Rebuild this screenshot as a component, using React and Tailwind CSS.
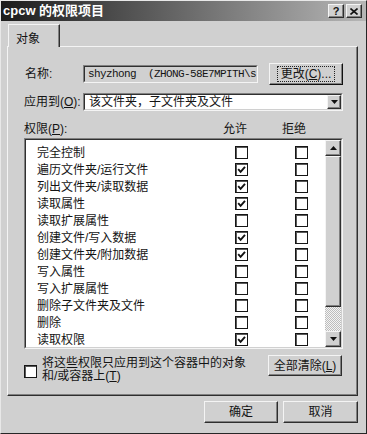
import React from 'react'

const rows = [
  ['完全控制', false],
  ['遍历文件夹/运行文件', true],
  ['列出文件夹/读取数据', true],
  ['读取属性', true],
  ['读取扩展属性', false],
  ['创建文件/写入数据', true],
  ['创建文件夹/附加数据', true],
  ['写入属性', false],
  ['写入扩展属性', false],
  ['删除子文件夹及文件', false],
  ['删除', false],
  ['读取权限', true],
]

function Raised({ className = '', children }) {
  return (
    <div
      className={`flex items-center justify-center border border-t-[#f4f4f4] border-l-[#f4f4f4] border-r-[#2e2e2e] border-b-[#2e2e2e] bg-[#d0d0d0] shadow-[inset_-1px_-1px_0_#808080] ${className}`}
    >
      {children}
    </div>
  )
}

function Sunken({ className = '', inner = '', children }) {
  return (
    <div className={`border border-t-[#808080] border-l-[#808080] border-r-[#f4f4f4] border-b-[#f4f4f4] ${className}`}>
      <div className={`h-full w-full border border-t-[#303030] border-l-[#303030] border-r-[#d0d0d0] border-b-[#d0d0d0] ${inner}`}>
        {children}
      </div>
    </div>
  )
}

function Check({ on }) {
  return (
    <div className="flex h-[13px] w-[13px] shrink-0 items-center justify-center border border-[#161616] bg-white shadow-[inset_1px_1px_0_#5a5a5a]">
      {on && (
        <svg width="9" height="9" viewBox="0 0 9 9">
          <path d="M1.2 4.2 L3.6 6.8 L8 1.8" stroke="#111" strokeWidth="1.9" fill="none" />
        </svg>
      )}
    </div>
  )
}

function Arrow({ up }) {
  return (
    <svg width="7" height="4" viewBox="0 0 7 4">
      <path d={up ? 'M3.5 0 L7 4 L0 4 Z' : 'M0 0 L7 0 L3.5 4 Z'} fill="#111" />
    </svg>
  )
}

export default function App() {
  return (
    <div className="h-[434px] w-[367px] overflow-hidden border border-t-[#e8e8e8] border-l-[#e8e8e8] border-r-[#262626] border-b-[#262626] bg-[#d0d0d0] font-['Liberation_Sans','Noto_Sans_CJK_SC',sans-serif] text-[12px] text-[#141414]">
      {/* title bar */}
      <div className="flex h-[20px] items-center justify-between bg-[linear-gradient(90deg,#1c1c1c,#b6b6b6)] pl-[2px] pr-[4px]">
        <span className="text-[13px] font-bold text-white">cpcw 的权限项目</span>
        <div className="flex gap-[2px]">
          <Raised className="h-[14px] w-[16px] text-[11px] font-bold leading-none">?</Raised>
          <Raised className="h-[14px] w-[16px]">
            <svg width="8" height="7" viewBox="0 0 8 7">
              <path d="M0.5 0.5 L7.5 6.5 M7.5 0.5 L0.5 6.5" stroke="#111" strokeWidth="1.6" />
            </svg>
          </Raised>
        </div>
      </div>

      {/* tab */}
      <div className="mt-[3px] flex pl-[7px]">
        <div className="relative z-10 -mb-[1px] h-[23px] w-[52px] border-l border-t border-r border-t-[#f4f4f4] border-l-[#f4f4f4] border-r-[#2e2e2e] bg-[#d0d0d0] pl-[7px] pt-[5px] shadow-[inset_-1px_0_0_#808080]">
          对象
        </div>
      </div>

      {/* panel */}
      <div className="ml-[6px] h-[350px] w-[351px] border border-t-[#f4f4f4] border-l-[#f4f4f4] border-r-[#2e2e2e] border-b-[#2e2e2e] pl-[16px] shadow-[inset_-1px_-1px_0_#808080]">
        <div className="mt-[16px] flex h-[22px] items-center">
          <span className="w-[59px] pl-[1px]">名称:</span>
          <Sunken className="h-[18px] w-[175px]" inner="flex items-center overflow-hidden whitespace-pre bg-[#d0d0d0] pl-[3px] font-['Liberation_Mono',monospace] text-[11px] tracking-[-0.6px]">
            {'shyzhong  (ZHONG-58E7MPITH\\shy'}
          </Sunken>
          <Raised className="ml-[11px] h-[22px] w-[74px] border-r-[#111] border-b-[#111]">
            <span className="border border-dotted border-[#222] px-[3px] leading-[14px]">
              更改(<u>C</u>)...
            </span>
          </Raised>
        </div>

        <div className="mt-[8px] flex h-[18px] items-center">
          <span className="w-[59px]">应用到(<u>O</u>):</span>
          <Sunken className="h-[18px] w-[260px]" inner="flex items-center justify-between bg-white pl-[4px]">
            <span>该文件夹，子文件夹及文件</span>
            <Raised className="h-[14px] w-[14px]">
              <Arrow />
            </Raised>
          </Sunken>
        </div>

        <div className="mt-[10px] flex h-[15px] items-center">
          <span className="w-[199px]">权限(<u>P</u>):</span>
          <span className="w-[59px]">允许</span>
          <span>拒绝</span>
        </div>

        <Sunken className="mt-[2px] h-[211px] w-[319px]" inner="flex bg-white">
          <div className="flex-1 pl-[11px] pt-[4px]">
            {rows.map(([name, on]) => (
              <div key={name} className="flex h-[17px] items-center">
                <span className="w-[198px]">{name}</span>
                <Check on={on} />
                <div className="ml-[47px]">
                  <Check on={false} />
                </div>
              </div>
            ))}
          </div>
          <div className="flex w-[16px] flex-col">
            <Raised className="h-[16px]">
              <Arrow up />
            </Raised>
            <Raised className="h-[151px]" />
            <div className="flex-1 bg-[repeating-conic-gradient(#f4f4f4_0_25%,#bdbdbd_0_50%)] bg-[length:2px_2px]" />
            <Raised className="h-[16px]">
              <Arrow />
            </Raised>
          </div>
        </Sunken>

        <div className="mt-[6px] flex items-start">
          <div className="flex w-[244px] items-start">
            <div className="mt-[10px]">
              <Check on={false} />
            </div>
            <div className="ml-[5px] pt-[2px] leading-[13px]">
              <div>将这些权限只应用到这个容器中的对象</div>
              <div>和/或容器上(<u>T</u>)</div>
            </div>
          </div>
          <Raised className="h-[21px] w-[74px]">全部清除(<u>L</u>)</Raised>
        </div>
      </div>

      {/* footer */}
      <div className="mt-[5px] flex justify-end gap-[5px] pr-[8px]">
        <Raised className="h-[22px] w-[74px]">确定</Raised>
        <Raised className="h-[22px] w-[75px]">取消</Raised>
      </div>
    </div>
  )
}
